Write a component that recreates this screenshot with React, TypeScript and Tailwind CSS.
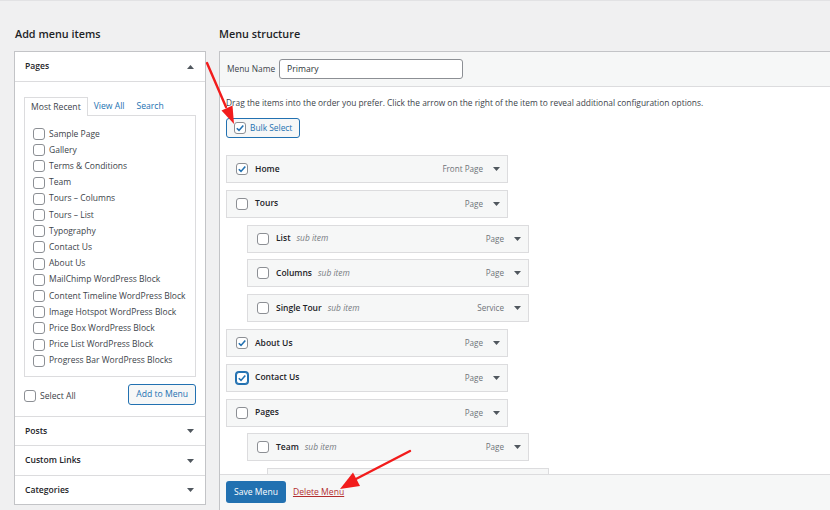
import React from 'react';

const font = { fontFamily: '"Open Sans", "Noto Sans", Arial, sans-serif' };

function Box({ checked = false, focus = false }: { checked?: boolean; focus?: boolean }) {
  return (
    <span
      className={`w-[12px] h-[12px] rounded-[3px] border bg-white flex items-center justify-center shrink-0 ${
        focus ? 'border-[#2271b1] shadow-[0_0_0_1px_#2271b1]' : 'border-[#8c8f94]'
      }`}
    >
      {checked && (
        <svg width="10" height="10" viewBox="0 0 10 10">
          <path d="M1.8 5.2 L4 7.4 L8.3 2.4" fill="none" stroke="#2271b1" strokeWidth="1.6" />
        </svg>
      )}
    </span>
  );
}

function Tri({ up = false }: { up?: boolean }) {
  return (
    <svg width="7" height="4" viewBox="0 0 7 4" className="shrink-0">
      <polygon points={up ? '0,4 7,4 3.5,0' : '0,0 7,0 3.5,4'} fill="#50575e" />
    </svg>
  );
}

const pages = [
  'Sample Page',
  'Gallery',
  'Terms & Conditions',
  'Team',
  'Tours – Columns',
  'Tours – List',
  'Typography',
  'Contact Us',
  'About Us',
  'MailChimp WordPress Block',
  'Content Timeline WordPress Block',
  'Image Hotspot WordPress Block',
  'Price Box WordPress Block',
  'Price List WordPress Block',
  'Progress Bar WordPress Blocks',
];

const menu = [
  { title: 'Home', type: 'Front Page', depth: 0, checked: true },
  { title: 'Tours', type: 'Page', depth: 0 },
  { title: 'List', type: 'Page', depth: 1, sub: true },
  { title: 'Columns', type: 'Page', depth: 1, sub: true },
  { title: 'Single Tour', type: 'Service', depth: 1, sub: true },
  { title: 'About Us', type: 'Page', depth: 0, checked: true },
  { title: 'Contact Us', type: 'Page', depth: 0, checked: true, focus: true },
  { title: 'Pages', type: 'Page', depth: 0 },
  { title: 'Team', type: 'Page', depth: 1, sub: true },
];

const indent: Record<number, string> = { 0: 'ml-0', 1: 'ml-[21px]', 2: 'ml-[41px]' };

export default function App() {
  return (
    <div
      className="relative w-[830px] h-[510px] overflow-hidden bg-[#f0f0f1] border-t border-[#e2e2e4] text-[#3c434a]"
      style={font}
    >
      <div className="flex gap-[13px] pl-[14px]">
        {/* Add menu items */}
        <div className="w-[192px] shrink-0">
          <h2 className="pt-[23px] h-[50px] leading-[20px] pl-[1px] text-[10.8px] font-semibold text-[#1d2327]">
            Add menu items
          </h2>
          <div className="bg-white border border-[#c3c4c7]">
            <div className="h-[30px] flex items-center justify-between px-[10px] border-b border-[#dcdcde]">
              <span className="text-[8.6px] font-semibold text-[#1d2327]">Pages</span>
              <span className="mr-[1px]"><Tri up /></span>
            </div>
            <div className="px-[9px] pt-[15px] pb-[11px]">
              <div className="flex text-[8.6px] h-[18px] items-stretch">
                <span className="relative z-10 -mb-px px-[6px] flex items-center bg-white border border-b-0 border-[#dcdcde]">
                  Most Recent
                </span>
                <span className="px-[6px] flex items-center text-[#2271b1]">View All</span>
                <span className="px-[6px] flex items-center text-[#2271b1]">Search</span>
              </div>
              <div className="border border-[#dcdcde] pl-[8px] pt-[10px] pb-[7px]">
                {pages.map((p) => (
                  <div key={p} className="h-[16.2px] flex items-center gap-[4px] text-[8.5px] whitespace-nowrap">
                    <Box />
                    <span>{p}</span>
                  </div>
                ))}
              </div>
              <div className="mt-[7px] flex items-center justify-between">
                <div className="flex items-center gap-[4px] text-[8.6px] pt-[4px]">
                  <Box />
                  <span>Select All</span>
                </div>
                <button className="h-[21px] px-[7px] rounded-[3px] border border-[#2271b1] bg-[#f6f7f7] text-[#2271b1] text-[8.6px]">
                  Add to Menu
                </button>
              </div>
            </div>
            {['Posts', 'Custom Links', 'Categories'].map((s) => (
              <div
                key={s}
                className="h-[29.5px] flex items-center justify-between px-[10px] border-t border-[#dcdcde]"
              >
                <span className="text-[8.6px] font-semibold text-[#1d2327]">{s}</span>
                <span className="mr-[1px]"><Tri /></span>
              </div>
            ))}
          </div>
        </div>

        {/* Menu structure */}
        <div className="w-[630px] shrink-0">
          <h2 className="pt-[23px] h-[50px] leading-[20px] text-[10.8px] font-semibold text-[#1d2327]">
            Menu structure
          </h2>
          <div className="h-[460px] flex flex-col border border-[#c3c4c7] bg-white">
            <div className="h-[35px] shrink-0 flex items-center gap-[4px] pl-[7px] bg-[#f6f7f7] border-b border-[#dcdcde]">
              <span className="text-[8.4px]">Menu Name</span>
              <div className="w-[184px] h-[20px] flex items-center pl-[7px] bg-white border border-[#8c8f94] rounded-[3px] text-[8.6px] text-[#2c3338]">
                Primary
              </div>
            </div>
            <div className="flex-1 overflow-hidden pl-[6px] pt-[11px]">
              <p className="text-[8.4px] leading-[10px] whitespace-nowrap">
                Drag the items into the order you prefer. Click the arrow on the right of the item to reveal additional
                configuration options.
              </p>
              <button className="mt-[10px] h-[20px] w-[74px] flex items-center gap-[4px] pl-[7px] rounded-[3px] border border-[#2271b1] bg-[#f6f7f7] text-[#2271b1] text-[8.4px]">
                <Box checked />
                <span>Bulk Select</span>
              </button>
              <div className="mt-[17px] flex flex-col gap-[6.8px]">
                {menu.map((m, i) => (
                  <div
                    key={i}
                    className={`${indent[m.depth]} w-[282px] h-[28px] shrink-0 flex items-center pl-[9px] pr-[7px] bg-[#f6f7f7] border border-[#dcdcde]`}
                  >
                    <Box checked={m.checked} focus={m.focus} />
                    <span className="ml-[7px] text-[8.5px] font-semibold text-[#1d2327]">{m.title}</span>
                    {m.sub && <span className="ml-[6px] text-[8.4px] italic text-[#787c82]">sub item</span>}
                    <span className="ml-auto text-[8.1px] text-[#6f7378]">{m.type}</span>
                    <span className="ml-[10px]"><Tri /></span>
                  </div>
                ))}
                <div className="ml-[41px] w-[282px] h-[28px] shrink-0 bg-[#f6f7f7] border border-[#dcdcde]" />
              </div>
            </div>
            <div className="h-[36px] shrink-0 flex items-start gap-[7px] pl-[6px] pt-[6px] bg-[#f6f7f7] border-t border-[#dcdcde]">
              <button className="h-[22px] px-[8px] rounded-[3px] bg-[#2271b1] text-white text-[8.6px]">Save Menu</button>
              <span className="h-[22px] flex items-center text-[8.6px] text-[#b32d2e] underline">Delete Menu</span>
            </div>
          </div>
        </div>
      </div>

      {/* red annotation arrows */}
      <svg className="absolute inset-0 pointer-events-none" width="830" height="510" viewBox="0 0 830 510">
        <path d="M207 62 L226 106" stroke="#f21c1c" strokeWidth="2.4" strokeLinecap="round" />
        <polygon points="234,123 221.5,109.5 232.5,104.5" fill="#f21c1c" />
        <path d="M410 450 L354 479" stroke="#f21c1c" strokeWidth="2.4" strokeLinecap="round" />
        <polygon points="340,488 353,471.5 360,485" fill="#f21c1c" />
      </svg>
    </div>
  );
}
